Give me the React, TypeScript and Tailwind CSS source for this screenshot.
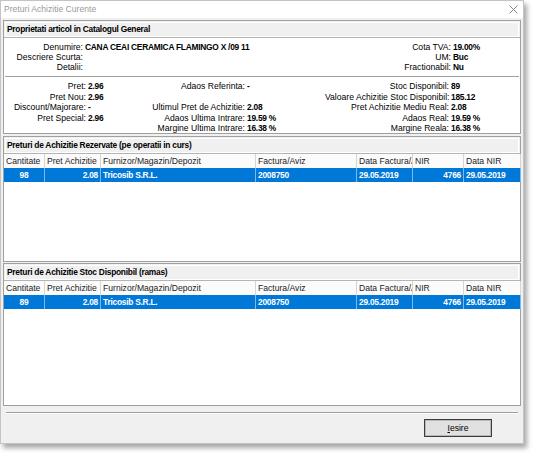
import { Fragment } from 'react';

type Row = {
  qty: string;
  price: string;
  furnizor: string;
  factura: string;
  dataFactura: string;
  nir: string;
  dataNir: string;
};

const COLUMNS = [
  { key: 'qty', title: 'Cantitate', width: 'w-[41px]', align: 'justify-center' },
  { key: 'price', title: 'Pret Achizitie', width: 'w-[56px]', align: 'justify-end' },
  { key: 'furnizor', title: 'Furnizor/Magazin/Depozit', width: 'w-[155px]', align: 'justify-start' },
  { key: 'factura', title: 'Factura/Aviz', width: 'w-[101px]', align: 'justify-start' },
  { key: 'dataFactura', title: 'Data Factura/Aviz', width: 'w-[56px]', align: 'justify-start' },
  { key: 'nir', title: 'NIR', width: 'w-[51px]', align: 'justify-end' },
  { key: 'dataNir', title: 'Data NIR', width: 'w-[57px]', align: 'justify-start' },
] as const;

const REZERVATE: Row[] = [
  { qty: '98', price: '2.08', furnizor: 'Tricosib S.R.L.', factura: '2008750', dataFactura: '29.05.2019', nir: '4766', dataNir: '29.05.2019' },
];

const STOC: Row[] = [
  { qty: '89', price: '2.08', furnizor: 'Tricosib S.R.L.', factura: '2008750', dataFactura: '29.05.2019', nir: '4766', dataNir: '29.05.2019' },
];

const FONT = { fontFamily: '"Liberation Sans", Arial, sans-serif' };

// value text: bold, slightly tightened so it keeps the narrow dialog look
const BOLD = 'text-[8.4px] font-bold tracking-[-0.25px]';
const LABEL = 'text-[8.6px] whitespace-nowrap text-right';

function PanelHeader({ title }: { title: string }) {
  return (
    <div
      className={`flex h-[17px] shrink-0 items-center border-b border-[#b4b4b4] bg-[#f0f0f0] px-[3px] outline outline-1 -outline-offset-2 outline-white ${BOLD}`}
    >
      {title}
    </div>
  );
}

function Grid({ title, rows, height }: { title: string; rows: Row[]; height: string }) {
  return (
    <section className={`flex ${height} flex-col border border-[#a0a0a0] bg-white`}>
      <PanelHeader title={title} />
      <div className="flex h-[14px] shrink-0 bg-[#fbfbfb]">
        {COLUMNS.map((col) => (
          <div
            key={col.key}
            className={`${col.width} flex shrink-0 items-center overflow-hidden whitespace-nowrap border-r border-[#d5d5d5] px-[2px] text-[8.6px] text-[#222]`}
          >
            {col.title}
          </div>
        ))}
      </div>
      {rows.map((row, i) => (
        <div key={i} className="flex h-[14px] shrink-0 bg-[#0078d7] text-white">
          {COLUMNS.map((col) => (
            <div
              key={col.key}
              className={`${col.width} ${col.align} flex shrink-0 items-center overflow-hidden whitespace-nowrap border-r border-[#7fb8ea] px-[2px] ${BOLD}`}
            >
              {row[col.key]}
            </div>
          ))}
        </div>
      ))}
      <div className="flex-1 bg-white" />
    </section>
  );
}

const TOP_ROWS: [string, string, string, string][] = [
  ['Denumire:', 'CANA CEAI CERAMICA FLAMINGO X /09 11', 'Cota TVA:', '19.00%'],
  ['Descriere Scurta:', '', 'UM:', 'Buc'],
  ['Detalii:', '', 'Fractionabil:', 'Nu'],
];

const PRICE_ROWS: [string, string, string, string, string, string][] = [
  ['Pret:', '2.96', 'Adaos Referinta:', '-', 'Stoc Disponibil:', '89'],
  ['Pret Nou:', '2.96', '', '', 'Valoare Achizitie Stoc Disponibil:', '185.12'],
  ['Discount/Majorare:', '-', 'Ultimul Pret de Achizitie:', '2.08', 'Pret Achizitie Mediu Real:', '2.08'],
  ['Pret Special:', '2.96', 'Adaos Ultima Intrare:', '19.59 %', 'Adaos Real:', '19.59 %'],
  ['', '', 'Margine Ultima Intrare:', '16.38 %', 'Margine Reala:', '16.38 %'],
];

function ArticleProperties() {
  return (
    <section className="flex h-[114px] flex-col border border-[#a0a0a0] bg-white">
      <PanelHeader title="Proprietati articol in Catalogul General" />
      <div className="grid grid-cols-[79px_1fr_auto_67px] gap-x-[2px] pt-[4px] leading-[10px]">
        {TOP_ROWS.map(([l1, v1, l2, v2]) => (
          <Fragment key={l1}>
            <span className={LABEL}>{l1}</span>
            <span className={`whitespace-nowrap ${BOLD}`}>{v1}</span>
            <span className={LABEL}>{l2}</span>
            <span className={`whitespace-nowrap ${BOLD}`}>{v2}</span>
          </Fragment>
        ))}
      </div>
      <div className="mx-[1px] mt-[4px] border-t border-[#a0a0a0]" />
      <div className="grid grid-cols-[82px_54px_105px_80px_124px_70px] pt-[4px] leading-[10.6px]">
        {PRICE_ROWS.map((r, i) => (
          <Fragment key={i}>
            <span className={LABEL}>{r[0]}</span>
            <span className={`whitespace-nowrap pl-[2px] ${BOLD}`}>{r[1]}</span>
            <span className={LABEL}>{r[2]}</span>
            <span className={`whitespace-nowrap pl-[2px] ${BOLD}`}>{r[3]}</span>
            <span className={LABEL}>{r[4]}</span>
            <span className={`whitespace-nowrap pl-[2px] ${BOLD}`}>{r[5]}</span>
          </Fragment>
        ))}
      </div>
    </section>
  );
}

export default function App() {
  return (
    <div className="h-[463px] w-[548px] overflow-hidden bg-white text-black" style={FONT}>
      <div className="flex h-[444px] w-[524px] flex-col border border-[#c4c4c4] bg-[#f0f0f0] shadow-[3px_4px_5px_rgba(0,0,0,0.35)]">
        <div className="flex h-[17px] shrink-0 items-center justify-between bg-white pl-[3px] pr-[5px]">
          <span className="text-[8.6px] text-[#9a9a9a]">Preturi Achizitie Curente</span>
          <svg width="9" height="9" viewBox="0 0 9 9" aria-hidden>
            <path d="M0.5 0.5 L8.5 8.5 M8.5 0.5 L0.5 8.5" stroke="#8a8a8a" strokeWidth="1" />
          </svg>
        </div>
        <div className="flex flex-1 flex-col px-[2px] pt-[2px]">
          <ArticleProperties />
          <div className="mt-[2px]">
            <Grid title="Preturi de Achizitie Rezervate (pe operatii in curs)" rows={REZERVATE} height="h-[126px]" />
          </div>
          <div className="mt-[1px]">
            <Grid title="Preturi de Achizitie Stoc Disponibil (ramas)" rows={STOC} height="h-[143px]" />
          </div>
          <div className="mx-[3px] mt-[6px] border-t border-b border-t-[#a0a0a0] border-b-white" />
          <div className="mt-[5px] flex justify-end pr-[29px]">
            <button
              type="button"
              className="h-[18px] w-[68px] border border-[#3c3c3c] bg-[#e1e1e1] text-[8.6px] outline outline-1 -outline-offset-2 outline-[#b8b8b8]"
            >
              <span className="underline">I</span>esire
            </button>
          </div>
        </div>
      </div>
    </div>
  );
}
